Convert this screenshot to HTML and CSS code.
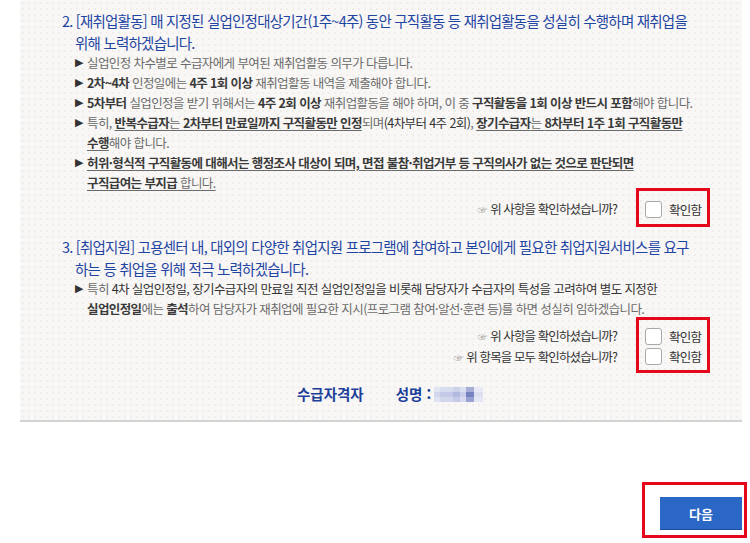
FILE: index.html
```html
<!DOCTYPE html>
<html lang="ko">
<head>
<meta charset="utf-8">
<title>수급자격자 확인</title>
<link rel="stylesheet" href="styles.css">
</head>
<body>
<div class="panel">
  <section class="item">
    <h3 class="title">2. [재취업활동] 매 지정된 실업인정대상기간(1주~4주) 동안 구직활동 등 재취업활동을 성실히 수행하며 재취업을<br>위해 노력하겠습니다.</h3>
    <ul class="list">
      <li><span class="arrow">▶</span><span class="txt">실업인정 차수별로 수급자에게 부여된 재취업활동 의무가 다릅니다.</span></li>
      <li><span class="arrow">▶</span><span class="txt"><b>2차~4차</b> 인정일에는 <b>4주 1회 이상</b> 재취업활동 내역을 제출해야 합니다.</span></li>
      <li><span class="arrow">▶</span><span class="txt"><b>5차부터</b> 실업인정을 받기 위해서는 <b>4주 2회 이상</b> 재취업활동을 해야 하며, 이 중 <b>구직활동을 1회 이상 반드시 포함</b>해야 합니다.</span></li>
      <li><span class="arrow">▶</span><span class="txt">특히, <u><b>반복수급자</b>는 <b>2차부터 만료일까지 구직활동만 인정</b></u>되며<span class="dark">(4차부터 4주 2회)</span>, <u><b>장기수급자</b>는 <b>8차부터 1주 1회 구직활동만</b></u><br><u><b>수행</b></u>해야 합니다.</span></li>
      <li><span class="arrow">▶</span><span class="txt"><u><b>허위·형식적 구직활동에 대해서는 행정조사 대상이 되며, 면접 불참·취업거부 등 구직의사가 없는 것으로 판단되면</b><br><b>구직급여는 부지급</b> 합니다.</u></span></li>
    </ul>
    <div class="confirm">
      <div class="questions">
        <p class="question"><span class="hand">☞</span> 위 사항을 확인하셨습니까?</p>
      </div>
      <div class="checkbox-box">
        <label class="check"><span class="box"></span>확인함</label>
      </div>
    </div>
  </section>

  <section class="item item-3">
    <h3 class="title">3. [취업지원] 고용센터 내, 대외의 다양한 취업지원 프로그램에 참여하고 본인에게 필요한 취업지원서비스를 요구<br>하는 등 취업을 위해 적극 노력하겠습니다.</h3>
    <ul class="list">
      <li><span class="arrow">▶</span><span class="txt">특히 <span class="dark">4차 실업인정일, 장기수급자의 만료일 직전 실업인정일을 비롯해 담당자가 수급자의 특성을 고려하여 별도 지정한</span><br><b>실업인정일</b>에는 <b>출석</b>하여 담당자가 재취업에 필요한 지시(프로그램 참여·알선·훈련 등)를 하면 성실히 임하겠습니다.</span></li>
    </ul>
    <div class="confirm confirm-double">
      <div class="questions">
        <p class="question"><span class="hand">☞</span> 위 사항을 확인하셨습니까?</p>
        <p class="question"><span class="hand">☞</span> 위 항목을 모두 확인하셨습니까?</p>
      </div>
      <div class="checkbox-box">
        <label class="check"><span class="box"></span>확인함</label>
        <label class="check"><span class="box"></span>확인함</label>
      </div>
    </div>
  </section>

  <div class="signer">
    <span class="signer-label">수급자격자</span>
    <span class="signer-name">성명 : <span class="blur"></span></span>
  </div>
</div>

<div class="actions">
  <div class="action-box">
    <button class="next" type="button">다음</button>
  </div>
</div>
</body>
</html>
```

FILE: styles.css
```css
html, body {
  margin: 0;
  padding: 0;
  background: #ffffff;
}

body {
  font-family: "Noto Sans CJK KR", "Malgun Gothic", sans-serif;
  color: #333333;
}

.panel {
  margin-left: 20px;
  width: 722px;
  box-sizing: border-box;
  padding: 10px 0 15px 42px;
  background-color: #f8f7f5;
  background-image: radial-gradient(circle, #f0eeeb 0.8px, transparent 1.2px);
  background-size: 6px 6px;
  border-bottom: 2px solid #d3d3d3;
}

.title {
  margin: 0;
  font-size: 14.5px;
  font-weight: normal;
  line-height: 22px;
  letter-spacing: -0.78px;
  color: #1f45a3;
  padding-left: 13px;
  text-indent: -13px;
  white-space: nowrap;
}

.list {
  list-style: none;
  margin: -1px 0 0 0;
  padding: 0 0 0 13px;
  font-size: 12.5px;
  line-height: 20px;
  letter-spacing: -0.6px;
  color: #6b6b6b;
}

.list li {
  display: flex;
  white-space: nowrap;
}

.arrow {
  flex: none;
  width: 12px;
  font-family: "DejaVu Sans", sans-serif;
  font-size: 11px;
  letter-spacing: 0;
  color: #333333;
}

.list b {
  color: #3a3a3a;
  font-weight: bold;
}

.list u {
  text-decoration: underline;
  text-underline-offset: 2px;
}

.dark {
  color: #333333;
}

.confirm {
  display: flex;
  justify-content: flex-end;
  align-items: flex-start;
  gap: 19px;
  margin: -5px 32px 0 0;
}

.questions {
  padding-top: 11px;
}

.question {
  margin: 0;
  font-size: 12.5px;
  line-height: 20px;
  letter-spacing: -0.9px;
  color: #333333;
  text-align: right;
  white-space: nowrap;
}

.hand {
  font-size: 10px;
  color: #9a9a9a;
  letter-spacing: 0;
}

.checkbox-box {
  width: 74px;
  box-sizing: border-box;
  border: 3px solid #e5081a;
  padding: 8px 4px 5px 6px;
}

.check {
  display: flex;
  align-items: center;
  gap: 7px;
  height: 20px;
  font-size: 12.5px;
  letter-spacing: -0.8px;
  color: #333333;
  white-space: nowrap;
}

.box {
  flex: none;
  width: 15px;
  height: 15px;
  background: #ffffff;
  border: 1px solid #a9a9a9;
  border-radius: 3px;
}

.item-3 {
  margin-top: 9px;
}

.confirm-double {
  margin-top: -2px;
}

.confirm-double .questions {
  padding-top: 9px;
}

.confirm-double .checkbox-box {
  padding: 6px 4px 4px 6px;
}

.signer {
  display: flex;
  align-items: center;
  gap: 32px;
  margin-top: 10px;
  padding-left: 235px;
  height: 22px;
  font-size: 14.5px;
  line-height: 22px;
  color: #1c3f9a;
  font-weight: bold;
}

.signer-name {
  display: flex;
  align-items: center;
  gap: 3px;
}

.blur {
  display: inline-block;
  width: 49px;
  height: 15px;
  background:
    linear-gradient(180deg, rgba(255,255,255,0.35) 0 5px, transparent 5px 10px, rgba(255,255,255,0.25) 10px 15px),
    linear-gradient(90deg, #d3d7ec 0 6px, #c3c9e6 6px 19px, #b2bae0 19px 26px, #c9cee9 26px 32px, #7683c0 32px 40px, #dcdff0 40px 49px);
  filter: blur(0.5px);
}

.actions {
  display: flex;
  justify-content: flex-end;
  padding-right: 3px;
  margin-top: 60px;
}

.action-box {
  border: 3px solid #e5081a;
  padding: 12px 2px 5px 15px;
}

.next {
  display: block;
  width: 82px;
  height: 33px;
  margin: 0;
  padding: 0;
  border: none;
  border-bottom: 1px solid #1d4f9e;
  background: #2b67c4;
  color: #ffffff;
  font-family: "Noto Sans CJK KR", "Malgun Gothic", sans-serif;
  font-size: 13px;
  font-weight: bold;
  cursor: pointer;
}
```
